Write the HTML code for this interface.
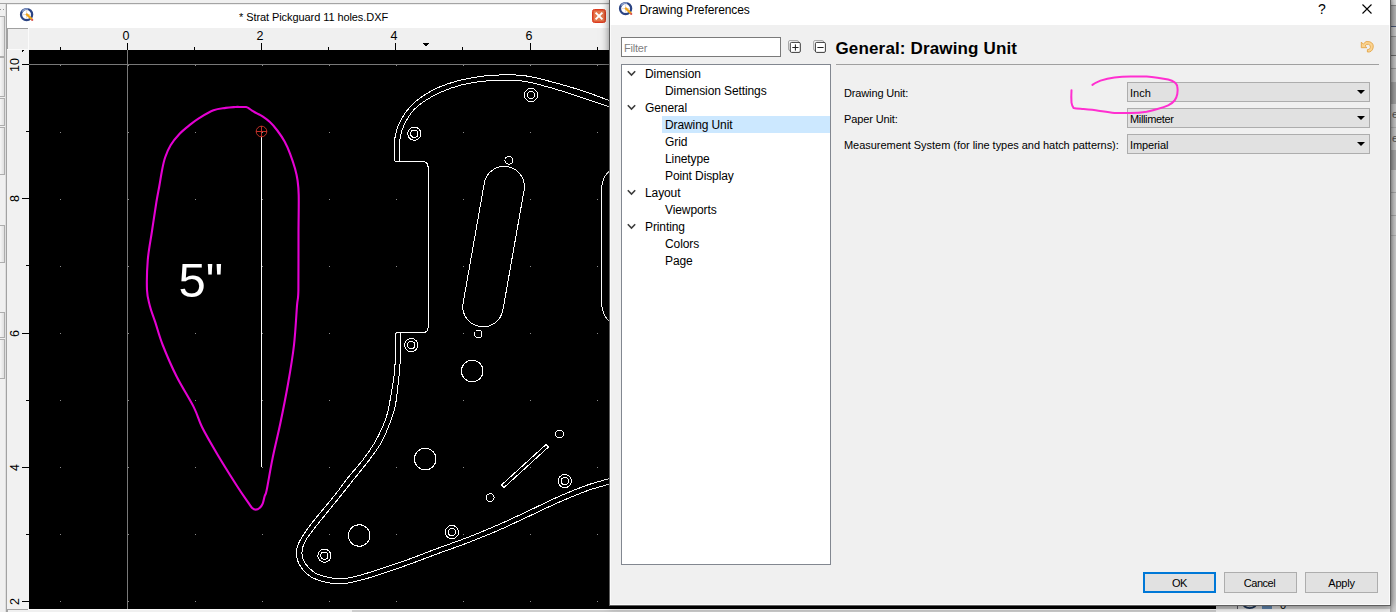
<!DOCTYPE html>
<html lang="en">
<head>
<meta charset="utf-8">
<title>Drawing Preferences</title>
<style>
html,body{margin:0;padding:0;}
body{width:1396px;height:612px;overflow:hidden;position:relative;background:#f0f0f0;font-family:"Liberation Sans",sans-serif;font-size:11px;color:#000;}
.abs{position:absolute;}
/* background application */
#topband{left:0;top:0;width:1396px;height:3px;background:#f0f0f0;}
#topline{left:0;top:3px;width:1396px;height:1px;background:#a4a4a4;}
#leftcol{left:0;top:4px;width:6px;height:608px;background:#f0f0f0;}
#leftline{left:5px;top:4px;width:2px;height:608px;background:linear-gradient(90deg,#dedede 50%,#a2a2a2 50%);}
.lbtn{left:0;width:4px;border:1px solid #adadad;border-left:none;background:linear-gradient(90deg,#f6f6f6,#e0e0e0);}
#mdititle{left:7px;top:4px;width:603px;height:24px;background:linear-gradient(#e6e6e6,#fff 1.5px);}
#mdititle .t{left:232px;top:6px;font-size:11px;line-height:14px;white-space:nowrap;letter-spacing:-0.08px;}
#mdiclose{left:592px;top:9px;width:12px;height:12px;border:1px solid #dc3c20;border-radius:2.5px;background:#e4784e;box-shadow:inset 0 0 0 0.5px #dc3c20;}
#hruler{left:7px;top:28px;width:1230px;height:22px;background:#f0f0f0;}
#corner{left:7px;top:28px;width:21px;height:21px;background:#efefef;border-top:1px solid #a0a0a0;border-left:1px solid #a0a0a0;box-sizing:border-box;}
#cornerw{left:28px;top:28px;width:1px;height:22px;background:#fbfbfb;}
#vruler{left:7px;top:49px;width:22px;height:560px;background:#f1f1f1;border-top:1px solid #fbfbfb;box-sizing:border-box;}
.hl{font-size:12.5px;top:30px;width:20px;text-align:center;line-height:12px;}
.vl{font-size:12.5px;left:9px;width:12px;height:20px;line-height:12px;writing-mode:vertical-rl;transform:rotate(180deg);text-align:center;white-space:nowrap;}
#canvas{left:29px;top:50px;width:1187px;height:559px;background:#000;}
#below{left:7px;top:609px;width:1389px;height:3px;background:#f0f0f0;}
#hscroll{left:352px;top:610px;width:864px;height:2px;background:#cdcdcd;}
#rightbg{left:1216px;top:0;width:180px;height:612px;background:#c4c4c4;}
#rightpanel{left:1237px;top:0;width:159px;height:612px;background:#cdcdcd;border-left:1px solid #55555f;}
/* dialog */
#shadow{left:610px;top:0;width:780px;height:605px;box-shadow:0 0 8px 1px rgba(0,0,0,.5);}
#dlgb{left:609px;top:-1px;width:780px;height:605px;border:1px solid #5f5f5f;}
#dlg{left:610px;top:0;width:780px;height:605px;background:#f0f0f0;box-shadow:inset 1px 0 #fbfbfb,inset -1px 0 #fbfbfb,inset 0 -1px #fbfbfb;}
#dlgtitle{left:0;top:0;width:780px;height:25px;background:#fff;}
#dlgtitle .t{left:29.5px;top:3px;font-size:12px;white-space:nowrap;letter-spacing:-0.1px;}
#filter{left:11px;top:37px;width:158px;height:18px;border:1px solid #7a7a7a;background:#fff;}
#filter span{position:absolute;left:2px;top:3px;font-size:11px;line-height:14px;color:#7f7f7f;letter-spacing:-0.2px;}
#tree{left:11px;top:64px;width:208px;height:499px;border:1px solid #828790;background:#fff;}
.row{left:0;width:208px;height:17px;line-height:17px;font-size:12px;white-space:nowrap;letter-spacing:-0.1px;}
.row .p{position:absolute;left:23px;top:1px;}
.row .c{position:absolute;left:43px;top:1px;}
.row svg{position:absolute;left:5px;top:4px;}
#sel{left:40px;top:51px;width:168px;height:17px;background:#cce8ff;}
#heading{left:225.5px;top:38.5px;font-size:17px;font-weight:bold;white-space:nowrap;letter-spacing:0.15px;}
#hr{left:226px;top:64px;width:543px;height:1px;background:#a0a0a0;}
.lab{left:234px;font-size:11px;white-space:nowrap;line-height:14px;letter-spacing:-0.08px;}
.combo{left:517px;width:241px;height:18px;border:1px solid #adadad;background:#e1e1e1;}
.combo span{position:absolute;left:2px;top:3px;font-size:11px;line-height:14px;}
.combo i{position:absolute;left:228.5px;top:7px;width:0;height:0;border-left:4px solid transparent;border-right:4px solid transparent;border-top:4px solid #000;}
.btn{top:572px;width:71px;height:19px;border:1px solid #adadad;background:#e1e1e1;text-align:center;line-height:21px;font-size:11px;}
#ok{border:2px solid #0078d7;width:69px;height:17px;line-height:19px;}
</style>
</head>
<body>
<!-- background app -->
<div id="topband" class="abs"></div>
<div id="topline" class="abs"></div>
<div id="leftcol" class="abs"></div>
<div id="leftline" class="abs"></div>
<div class="lbtn abs" style="top:16px;height:39px"></div><div class="abs" style="left:0;top:9px;width:1px;height:1px;background:#999"></div><div class="abs" style="left:3px;top:9px;width:1px;height:1px;background:#999"></div><div class="lbtn abs" style="top:57px;height:38px"></div><div class="lbtn abs" style="top:98px;height:26px"></div><div class="lbtn abs" style="top:127px;height:46px"></div><div class="lbtn abs" style="top:225px;height:36px"></div><div class="lbtn abs" style="top:312px;height:24px"></div><div class="lbtn abs" style="top:339px;height:38px"></div>
<div id="rightbg" class="abs"></div>
<div id="rightpanel" class="abs"></div>
<svg class="abs" style="left:1237px;top:590px" width="70" height="22" viewBox="1237 590 70 22">
<ellipse cx="1249.7" cy="602.5" rx="7.2" ry="5.6" fill="none" stroke="#1c3354" stroke-width="1.7"/>
<circle cx="1249.7" cy="602.5" r="3" fill="none" stroke="#1c3354" stroke-width="1.5"/>
<rect x="1262" y="600" width="10" height="10.5" fill="#5d81a8"/>
<text x="1280" y="608.7" font-family="Liberation Sans, sans-serif" font-size="11" fill="#000">0</text>
</svg>
<div id="mdititle" class="abs">
  <div class="t abs">* Strat Pickguard 11 holes.DXF</div>
</div>
<div id="mdiclose" class="abs"><svg class="abs" style="left:0;top:0" width="12" height="12"><path d="M2.6 2.6 L9.4 9.4 M9.4 2.6 L2.6 9.4" stroke="#fff" stroke-width="2" fill="none"/></svg></div>
<svg class="abs" style="left:19.2px;top:7.4px" width="16" height="16" viewBox="0 0 16 16"><circle cx="7.6" cy="7.6" r="5.6" fill="#fff" stroke="#2b4484" stroke-width="2.2"/><path d="M7.6 3.4 V11.6 M3.4 7.6 H11.6" stroke="#d9c9c9" stroke-width="0.8" fill="none"/><path d="M3.2 4.6 A5.6 5.6 0 0 1 9 2.2" stroke="#8fa3cf" stroke-width="1.6" fill="none"/><path d="M7.8 7.4 L12.6 12" stroke="#f2a516" stroke-width="2.2" stroke-linecap="round" fill="none"/><circle cx="13.2" cy="12.9" r="1.1" fill="#d9534f"/></svg>
<div id="hruler" class="abs"></div>
<div id="corner" class="abs"></div>
<div id="cornerw" class="abs"></div>
<div id="vruler" class="abs"></div>
<!--RULER-->
<svg class="abs" style="left:0;top:0" width="1237" height="612" shape-rendering="crispEdges" fill="#000">
<rect x="60" y="47" width="1" height="3"/>
<rect x="127" y="43" width="1" height="7"/>
<rect x="194" y="47" width="1" height="3"/>
<rect x="261" y="43" width="1" height="7"/>
<rect x="328" y="47" width="1" height="3"/>
<rect x="395" y="43" width="1" height="7"/>
<rect x="462" y="47" width="1" height="3"/>
<rect x="530" y="43" width="1" height="7"/>
<rect x="597" y="47" width="1" height="3"/>
<rect x="22" y="64" width="7" height="1"/>
<rect x="26" y="131" width="3" height="1"/>
<rect x="22" y="198" width="7" height="1"/>
<rect x="26" y="265" width="3" height="1"/>
<rect x="22" y="333" width="7" height="1"/>
<rect x="26" y="400" width="3" height="1"/>
<rect x="22" y="467" width="7" height="1"/>
<rect x="26" y="534" width="3" height="1"/>
<rect x="22" y="601" width="7" height="1"/>
<path d="M423 43 h6 v1 h-1 v1 h-1 v1 h-2 v-1 h-1 v-1 h-1 z"/>
<path d="M22 50 h2 v1 h-1 v1 h-1 z"/>
</svg>
<div class="hl abs" style="left:116px">0</div>
<div class="hl abs" style="left:250px">2</div>
<div class="hl abs" style="left:384px">4</div>
<div class="hl abs" style="left:519px">6</div>
<div class="vl abs" style="top:55px">10</div>
<div class="vl abs" style="top:189px">8</div>
<div class="vl abs" style="top:324px">6</div>
<div class="vl abs" style="top:458px">4</div>
<div class="vl abs" style="top:592px">2</div>
<!--/RULER-->
<div id="canvas" class="abs"></div>
<!--CANVAS-START-->
<svg class="abs" style="left:0;top:0" width="1396" height="612" viewBox="0 0 1396 612">
<defs><clipPath id="cv"><rect x="29" y="50" width="1187" height="559"/></clipPath></defs>
<g clip-path="url(#cv)" fill="none" shape-rendering="crispEdges">
<rect x="127" y="50" width="1" height="559" fill="#787878"/>
<rect x="29" y="64" width="1187" height="1" fill="#787878"/>
<g fill="#8a8a8a"><rect x="60" y="65" width="1" height="1"/><rect x="60" y="132" width="1" height="1"/><rect x="60" y="199" width="1" height="1"/><rect x="60" y="266" width="1" height="1"/><rect x="60" y="333" width="1" height="1"/><rect x="60" y="400" width="1" height="1"/><rect x="60" y="467" width="1" height="1"/><rect x="60" y="534" width="1" height="1"/><rect x="60" y="601" width="1" height="1"/><rect x="128" y="65" width="1" height="1"/><rect x="128" y="132" width="1" height="1"/><rect x="128" y="199" width="1" height="1"/><rect x="128" y="266" width="1" height="1"/><rect x="128" y="333" width="1" height="1"/><rect x="128" y="400" width="1" height="1"/><rect x="128" y="467" width="1" height="1"/><rect x="128" y="534" width="1" height="1"/><rect x="128" y="601" width="1" height="1"/><rect x="195" y="65" width="1" height="1"/><rect x="195" y="132" width="1" height="1"/><rect x="195" y="199" width="1" height="1"/><rect x="195" y="266" width="1" height="1"/><rect x="195" y="333" width="1" height="1"/><rect x="195" y="400" width="1" height="1"/><rect x="195" y="467" width="1" height="1"/><rect x="195" y="534" width="1" height="1"/><rect x="195" y="601" width="1" height="1"/><rect x="262" y="65" width="1" height="1"/><rect x="262" y="132" width="1" height="1"/><rect x="262" y="199" width="1" height="1"/><rect x="262" y="266" width="1" height="1"/><rect x="262" y="333" width="1" height="1"/><rect x="262" y="400" width="1" height="1"/><rect x="262" y="467" width="1" height="1"/><rect x="262" y="534" width="1" height="1"/><rect x="262" y="601" width="1" height="1"/><rect x="329" y="65" width="1" height="1"/><rect x="329" y="132" width="1" height="1"/><rect x="329" y="199" width="1" height="1"/><rect x="329" y="266" width="1" height="1"/><rect x="329" y="333" width="1" height="1"/><rect x="329" y="400" width="1" height="1"/><rect x="329" y="467" width="1" height="1"/><rect x="329" y="534" width="1" height="1"/><rect x="329" y="601" width="1" height="1"/><rect x="396" y="65" width="1" height="1"/><rect x="396" y="132" width="1" height="1"/><rect x="396" y="199" width="1" height="1"/><rect x="396" y="266" width="1" height="1"/><rect x="396" y="333" width="1" height="1"/><rect x="396" y="400" width="1" height="1"/><rect x="396" y="467" width="1" height="1"/><rect x="396" y="534" width="1" height="1"/><rect x="396" y="601" width="1" height="1"/><rect x="463" y="65" width="1" height="1"/><rect x="463" y="132" width="1" height="1"/><rect x="463" y="199" width="1" height="1"/><rect x="463" y="266" width="1" height="1"/><rect x="463" y="333" width="1" height="1"/><rect x="463" y="400" width="1" height="1"/><rect x="463" y="467" width="1" height="1"/><rect x="463" y="534" width="1" height="1"/><rect x="463" y="601" width="1" height="1"/><rect x="530" y="65" width="1" height="1"/><rect x="530" y="132" width="1" height="1"/><rect x="530" y="199" width="1" height="1"/><rect x="530" y="266" width="1" height="1"/><rect x="530" y="333" width="1" height="1"/><rect x="530" y="400" width="1" height="1"/><rect x="530" y="467" width="1" height="1"/><rect x="530" y="534" width="1" height="1"/><rect x="530" y="601" width="1" height="1"/><rect x="597" y="65" width="1" height="1"/><rect x="597" y="132" width="1" height="1"/><rect x="597" y="199" width="1" height="1"/><rect x="597" y="266" width="1" height="1"/><rect x="597" y="333" width="1" height="1"/><rect x="597" y="400" width="1" height="1"/><rect x="597" y="467" width="1" height="1"/><rect x="597" y="534" width="1" height="1"/><rect x="597" y="601" width="1" height="1"/><rect x="664" y="65" width="1" height="1"/><rect x="664" y="132" width="1" height="1"/><rect x="664" y="199" width="1" height="1"/><rect x="664" y="266" width="1" height="1"/><rect x="664" y="333" width="1" height="1"/><rect x="664" y="400" width="1" height="1"/><rect x="664" y="467" width="1" height="1"/><rect x="664" y="534" width="1" height="1"/><rect x="664" y="601" width="1" height="1"/></g>
</g>
<g clip-path="url(#cv)" fill="none" stroke="#fff" stroke-width="1" shape-rendering="crispEdges">
<path d="M394.4 161.4 C394.4 158.2 394.0 147.6 394.4 142.5 C394.8 137.4 395.3 134.6 396.5 130.6 C397.7 126.6 399.3 122.7 401.6 118.7 C403.9 114.7 406.7 110.5 410.1 106.8 C413.5 103.1 417.2 99.9 422.0 96.6 C426.8 93.3 433.3 89.8 439.0 87.2 C444.7 84.7 450.3 82.9 456.0 81.3 C461.7 79.7 467.3 78.6 473.0 77.6 C478.7 76.6 484.2 75.9 490.0 75.4 C495.8 75.0 502.8 74.9 508.0 74.9 C513.2 74.9 516.7 74.9 521.1 75.3 C525.5 75.7 529.2 76.4 534.4 77.5 C539.6 78.6 546.3 80.4 552.2 82.0 C558.1 83.6 564.0 85.1 569.9 86.9 C575.8 88.7 581.1 90.3 587.7 92.6 C594.3 94.9 605.2 99.0 609.4 100.6 C613.6 102.2 612.4 101.8 613.0 102.0"/>
<path d="M399.5 161.4 C399.5 158.2 399.1 147.5 399.5 142.5 C399.9 137.5 400.5 135.1 401.6 131.4 C402.8 127.7 404.3 124.1 406.4 120.4 C408.5 116.7 411.0 112.7 414.3 109.3 C417.6 105.9 421.5 103.0 426.2 100.0 C430.9 97.0 436.9 93.9 442.4 91.5 C447.9 89.1 453.7 87.1 459.4 85.5 C465.1 83.9 470.7 82.9 476.4 82.1 C482.1 81.2 488.1 80.8 493.4 80.4 C498.7 80.1 504.0 80.0 508.0 80.0 C512.0 80.0 513.8 80.0 517.5 80.4 C521.2 80.8 525.0 81.3 530.0 82.4 C535.0 83.5 541.8 85.3 547.7 86.9 C553.6 88.5 559.6 90.4 565.5 92.2 C571.4 94.0 575.9 95.6 583.2 98.0 C590.5 100.4 604.4 105.0 609.4 106.7 C614.4 108.4 612.4 107.8 613.0 108.0"/>
<path d="M394.5 161.5 H423 Q427.8 161.8 428 166.5 V328 Q427.8 332.3 423.5 332.5 H395.5"/>
<path d="M395.5 332.5 C395.5 335.7 395.9 344.6 395.7 351.9 C395.4 359.2 394.9 368.4 394.0 376.4 C393.1 384.4 391.2 393.9 390.1 400.0 C389.0 406.1 388.8 408.4 387.5 413.0 C386.2 417.6 384.5 422.5 382.3 427.5 C380.1 432.5 377.7 437.7 374.4 443.1 C371.1 448.5 367.4 454.0 362.7 460.1 C358.0 466.2 350.7 474.1 346.3 479.7 C341.9 485.2 342.1 486.0 336.2 493.4 C330.3 500.8 317.0 516.3 310.9 524.3 C304.8 532.2 302.1 536.4 299.7 541.1 C297.3 545.8 296.3 548.4 296.3 552.4 C296.3 556.4 297.3 560.9 299.7 565.0 C302.1 569.1 306.2 573.8 310.9 576.8 C315.6 579.8 322.9 581.5 327.8 582.7 C332.7 583.9 336.0 583.9 340.0 583.8 C344.0 583.7 346.6 583.5 352.0 582.3 C357.4 581.1 363.8 579.6 372.7 576.8 C381.6 574.0 394.5 569.6 405.4 565.7 C416.3 561.8 427.2 557.6 438.0 553.6 C448.8 549.6 459.8 545.9 470.0 541.9 C480.2 537.9 489.6 534.2 499.4 529.9 C509.2 525.6 519.0 520.8 528.8 516.3 C538.6 511.7 548.4 506.9 558.2 502.6 C568.0 498.3 579.1 493.7 587.6 490.6 C596.1 487.6 604.8 485.5 609.0 484.3 C613.2 483.1 612.3 483.5 613.0 483.3"/>
<path d="M400.3 332.5 C400.3 337.4 400.5 353.6 400.2 361.7 C399.9 369.8 399.0 374.9 398.4 381.3 C397.8 387.7 397.1 394.7 396.3 400.0 C395.5 405.3 394.8 408.4 393.4 413.0 C392.0 417.6 390.3 422.5 388.2 427.5 C386.1 432.5 384.2 437.7 381.0 443.1 C377.8 448.5 373.8 454.0 369.2 460.1 C364.6 466.2 358.3 473.7 353.5 479.7 C348.7 485.7 346.6 488.5 340.4 496.2 C334.2 503.9 322.4 518.2 316.5 525.7 C310.6 533.2 307.7 536.7 305.3 541.1 C302.9 545.5 302.0 548.8 301.9 552.4 C301.8 556.0 302.5 559.4 304.7 562.8 C306.9 566.2 311.0 570.4 315.1 572.9 C319.2 575.4 325.1 576.6 329.2 577.6 C333.3 578.6 336.2 578.8 340.0 578.8 C343.8 578.8 346.6 578.5 352.0 577.3 C357.4 576.1 363.8 574.2 372.7 571.4 C381.6 568.6 394.5 564.4 405.4 560.5 C416.3 556.6 427.2 552.2 438.0 548.2 C448.8 544.2 459.8 540.5 470.0 536.5 C480.2 532.5 489.6 528.6 499.4 524.3 C509.2 520.0 519.0 515.3 528.8 510.7 C538.6 506.1 548.4 501.1 558.2 496.8 C568.0 492.5 579.1 488.0 587.6 485.0 C596.1 482.0 604.8 479.9 609.0 478.7 C613.2 477.5 612.3 477.9 613.0 477.7"/>
<path d="M484.3 183.1 A20.2 20.2 0 0 1 524.1 190.1 L502.9 310.1 A20.2 20.2 0 0 1 463.1 303.1 Z"/>
<path d="M616 168 Q601.5 172 601.5 192 V300 Q601.5 320 616 325"/>
<circle cx="531.0" cy="95.0" r="6.6"/><circle cx="531.0" cy="95.0" r="3.6"/>
<circle cx="414.3" cy="133.7" r="6.6"/><circle cx="414.3" cy="133.7" r="3.6"/>
<circle cx="411.2" cy="345.1" r="6.6"/><circle cx="411.2" cy="345.1" r="3.6"/>
<circle cx="324.4" cy="555.7" r="6.6"/><circle cx="324.4" cy="555.7" r="3.6"/>
<circle cx="451.9" cy="532.1" r="6.6"/><circle cx="451.9" cy="532.1" r="3.6"/>
<circle cx="564.8" cy="481.1" r="6.6"/><circle cx="564.8" cy="481.1" r="3.6"/>
<circle cx="508.8" cy="160.3" r="3.9"/>
<circle cx="478.1" cy="334.0" r="3.9"/>
<circle cx="559.6" cy="434.0" r="3.9"/>
<circle cx="490.2" cy="497.6" r="3.9"/>
<circle cx="472.2" cy="371.0" r="10.8"/>
<circle cx="425.2" cy="459.1" r="10.8"/>
<circle cx="359.2" cy="535.5" r="10.8"/>
<path d="M501.5 485 L546 444.5 L548.5 447 L504 487.5 Z"/>
<path d="M261.5 137 V467" stroke-width="1"/>
</g>
<g clip-path="url(#cv)" fill="none" stroke="#c03028" stroke-width="1"><circle cx="261.5" cy="131.5" r="5.3"/><path d="M256 131.5 H267 M261.5 126 V137"/></g>
<path clip-path="url(#cv)" d="M240.0 107.0 C239.3 107.0 238.0 106.8 235.6 107.0 C233.2 107.2 229.5 107.4 225.8 107.9 C222.1 108.5 218.0 108.6 213.5 110.3 C209.0 112.0 202.9 115.8 198.8 118.3 C194.7 120.8 192.3 122.9 189.0 125.6 C185.7 128.2 182.3 130.9 179.2 134.2 C176.1 137.5 172.9 141.3 170.6 145.2 C168.2 149.1 166.5 153.4 165.1 157.5 C163.7 161.6 163.0 165.4 162.1 170.0 C161.2 174.6 160.4 179.7 159.5 185.0 C158.6 190.3 157.7 194.3 156.4 202.0 C155.2 209.7 153.4 221.4 152.0 231.0 C150.6 240.6 148.6 249.9 147.8 259.7 C147.0 269.5 146.7 282.3 147.0 290.0 C147.3 297.7 148.5 300.5 149.8 305.7 C151.1 310.9 152.8 314.8 155.0 321.4 C157.2 327.9 159.1 335.9 162.7 345.0 C166.3 354.1 171.3 365.9 176.5 376.3 C181.7 386.7 189.8 399.2 194.0 407.6 C198.2 416.1 198.1 419.1 202.0 427.0 C205.9 434.9 211.8 444.9 217.6 454.7 C223.4 464.5 231.8 477.8 237.0 486.0 C242.2 494.2 246.5 500.0 249.0 503.7 C251.5 507.4 251.1 507.0 252.2 508.0 C253.3 509.0 254.5 509.6 255.7 509.6 C256.9 509.6 258.4 509.0 259.6 508.0 C260.8 507.0 261.9 505.7 262.7 503.7 C263.5 501.7 264.0 498.3 264.7 496.0 C265.4 493.7 265.4 496.2 266.7 490.0 C268.0 483.8 270.2 469.8 272.5 458.6 C274.8 447.4 277.8 435.4 280.4 423.0 C283.0 410.6 285.7 397.0 288.0 384.0 C290.3 371.0 292.5 358.1 294.0 345.0 C295.5 331.9 296.3 314.9 297.0 305.7 C297.7 296.5 298.1 302.4 298.4 290.0 C298.6 277.6 298.4 246.8 298.5 231.0 C298.6 215.2 298.9 203.5 298.7 195.0 C298.5 186.5 298.1 184.4 297.5 180.0 C296.9 175.6 296.2 172.9 295.0 168.5 C293.8 164.1 291.8 158.3 290.1 153.8 C288.4 149.3 286.7 145.5 284.6 141.6 C282.5 137.7 279.8 133.8 277.3 130.5 C274.9 127.2 272.4 124.3 269.9 122.0 C267.4 119.7 264.7 117.9 262.5 116.4 C260.3 114.9 258.2 114.2 256.5 113.2 C254.8 112.2 253.3 111.4 252.0 110.6 C250.7 109.8 249.6 108.8 248.6 108.2 C247.6 107.6 246.9 107.3 246.0 107.1 C245.1 106.9 244.0 107.0 243.0 107.0 C242.0 107.0 240.5 107.0 240.0 107.0" fill="none" stroke="#e400d2" stroke-width="2.1" stroke-linejoin="round"/>
<text clip-path="url(#cv)" x="178.5" y="296.8" font-family="Liberation Sans, sans-serif" font-size="49" fill="#fff">5"</text>
</svg>
<!--CANVAS-END-->
<div id="below" class="abs"></div>
<div id="hscroll" class="abs"></div>
<div class="abs" style="left:7px;top:609px;width:21px;height:1px;background:#a4a4a4"></div><div class="abs" style="left:7px;top:610px;width:1px;height:2px;background:#a4a4a4"></div><div class="abs" style="left:28px;top:609px;width:1188px;height:1px;background:#fbfbfb"></div>

<div class="abs" id="rstrip" style="left:1390px;top:0;width:6px;height:612px;background:#c6c6c6;overflow:hidden;">
<div class="abs" style="left:0;top:0;width:6px;height:5px;background:#dcdcdc"></div>
<div class="abs" style="left:0;top:5px;width:6px;height:21px;background:#b9b9b9;border-top:1px solid #8a8a8a"></div>
<div class="abs" style="left:0;top:26px;width:6px;height:10px;background:#cbcbcb;border-top:1px solid #4a5878"></div>
<div class="abs" style="left:0;top:36px;width:6px;height:19px;background:#bdbdbd;border-top:1px solid #8f8f8f"></div>
<div class="abs" style="left:0;top:55px;width:6px;height:13px;background:#cacaca;border-top:1px solid #6e6e6e"></div>
<div class="abs" style="left:0;top:68px;width:6px;height:14px;background:#c4c4c4;border-top:1px solid #9a9a9a"></div>
<div class="abs" style="left:0;top:82px;width:6px;height:22px;background:#a4a4a4"></div>
<div class="abs" style="left:0;top:104px;width:6px;height:23px;background:#cacaca"></div>
<div class="abs" style="left:0;top:127px;width:6px;height:23px;background:#cacaca;border-top:1px solid #b0b0b0"></div>
<div class="abs" style="left:0;top:150px;width:6px;height:20px;background:#a9a9a9"></div>
<div class="abs" style="left:0;top:170px;width:6px;height:442px;background:#cfcfcf"></div>
<div class="abs" style="left:0;top:192px;width:6px;height:1px;background:#aaa"></div>
<div class="abs" style="left:0;top:215px;width:6px;height:1px;background:#aaa"></div>
<div class="abs" style="left:0;top:235px;width:6px;height:1px;background:#b4b4b4"></div>
<div class="abs" style="left:2px;top:108px;font-size:11px;color:#555">e</div>
<div class="abs" style="left:2px;top:132px;font-size:11px;color:#555">e</div>
<div class="abs" style="left:0;top:0;width:6px;height:612px;background:linear-gradient(90deg,rgba(0,0,0,.2),rgba(0,0,0,.04) 50%,rgba(0,0,0,0))"></div>
</div>
<!-- dialog -->
<div id="shadow" class="abs"></div>
<div id="dlgb" class="abs"></div>
<div id="dlg" class="abs">
  <div id="dlgtitle" class="abs"><div class="t abs">Drawing Preferences</div></div>
<svg class="abs" style="left:8.2px;top:1.2px" width="16" height="16" viewBox="0 0 16 16"><circle cx="7.6" cy="7.6" r="5.6" fill="#fff" stroke="#2b4484" stroke-width="2.2"/><path d="M7.6 3.4 V11.6 M3.4 7.6 H11.6" stroke="#d9c9c9" stroke-width="0.8" fill="none"/><path d="M3.2 4.6 A5.6 5.6 0 0 1 9 2.2" stroke="#8fa3cf" stroke-width="1.6" fill="none"/><path d="M7.8 7.4 L12.6 12" stroke="#f2a516" stroke-width="2.2" stroke-linecap="round" fill="none"/><circle cx="13.2" cy="12.9" r="1.1" fill="#d9534f"/></svg>
  <svg class="abs" style="left:0;top:0" width="780" height="604" viewBox="610 0 780 604" fill="none">
    <!-- title buttons -->
    <path d="M1362.5 4.5 L1371.5 13.5 M1371.5 4.5 L1362.5 13.5" stroke="#000" stroke-width="1.1"/>
    <!-- expand / collapse icons -->
    <rect x="788.5" y="40.5" width="10" height="10" rx="1.5" stroke="#a9a9a9" fill="#f4f4f4"/>
    <rect x="790.3" y="42.4" width="10" height="10" rx="1.3" stroke="#3a3a3a" fill="#fff"/>
    <path d="M792.3 47.5 H798.5 M795.4 44.4 V50.6" stroke="#222" stroke-width="1"/>
    <rect x="813.6" y="40.5" width="10" height="10" rx="1.5" stroke="#a9a9a9" fill="#f4f4f4"/>
    <rect x="815.4" y="42.4" width="10" height="10" rx="1.3" stroke="#3a3a3a" fill="#fff"/>
    <path d="M817.4 47.5 H823.6" stroke="#222" stroke-width="1"/>
    <!-- undo icon -->
    <path d="M1361.3 42.1 L1363.3 44.1 A5.3 5.3 0 1 1 1367.4 52 L1367.4 49.6 A2.7 2.7 0 1 0 1365.2 46 L1366.9 47.7 L1361.3 47.7 Z" fill="#fbd38f" stroke="#e3a548" stroke-width="0.9" stroke-linejoin="round"/>
  </svg>
  <div class="abs" style="left:708px;top:1px;font-size:14px;line-height:16px;">?</div>
  <div id="filter" class="abs"><span>Filter</span></div>
  <div id="tree" class="abs">
    <div id="sel" class="abs"></div>
    <div class="row abs" style="top:0px"><svg width="9" height="9" viewBox="0 0 9 9"><path d="M0.8 2.3 L4.5 6 L8.2 2.3" fill="none" stroke="#3c3c3c" stroke-width="1.6"/></svg><span class="p">Dimension</span></div>
    <div class="row abs" style="top:17px"><span class="c">Dimension Settings</span></div>
    <div class="row abs" style="top:34px"><svg width="9" height="9" viewBox="0 0 9 9"><path d="M0.8 2.3 L4.5 6 L8.2 2.3" fill="none" stroke="#3c3c3c" stroke-width="1.6"/></svg><span class="p">General</span></div>
    <div class="row abs" style="top:51px"><span class="c">Drawing Unit</span></div>
    <div class="row abs" style="top:68px"><span class="c">Grid</span></div>
    <div class="row abs" style="top:85px"><span class="c">Linetype</span></div>
    <div class="row abs" style="top:102px"><span class="c">Point Display</span></div>
    <div class="row abs" style="top:119px"><svg width="9" height="9" viewBox="0 0 9 9"><path d="M0.8 2.3 L4.5 6 L8.2 2.3" fill="none" stroke="#3c3c3c" stroke-width="1.6"/></svg><span class="p">Layout</span></div>
    <div class="row abs" style="top:136px"><span class="c">Viewports</span></div>
    <div class="row abs" style="top:153px"><svg width="9" height="9" viewBox="0 0 9 9"><path d="M0.8 2.3 L4.5 6 L8.2 2.3" fill="none" stroke="#3c3c3c" stroke-width="1.6"/></svg><span class="p">Printing</span></div>
    <div class="row abs" style="top:170px"><span class="c">Colors</span></div>
    <div class="row abs" style="top:187px"><span class="c">Page</span></div>
  </div>
  <div id="heading" class="abs">General: Drawing Unit</div>
  <div id="hr" class="abs"></div>

  <div class="lab abs" style="top:86px;letter-spacing:-0.14px">Drawing Unit:</div>
  <div class="lab abs" style="top:112px;letter-spacing:-0.13px">Paper Unit:</div>
  <div class="lab abs" style="top:138px;letter-spacing:-0.04px">Measurement System (for line types and hatch patterns):</div>
  <div class="combo abs" style="top:82px"><span>Inch</span><i></i></div>
  <div class="combo abs" style="top:108px"><span style="letter-spacing:-0.36px">Millimeter</span><i></i></div>
  <div class="combo abs" style="top:134px"><span style="letter-spacing:-0.1px">Imperial</span><i></i></div>
  <div id="ok" class="btn abs" style="left:533px;letter-spacing:-0.5px">OK</div>
  <div class="btn abs" style="left:614px;letter-spacing:-0.45px;width:69px;padding-right:2px">Cancel</div>
  <div class="btn abs" style="left:695px;letter-spacing:-0.25px">Apply</div>
  <svg class="abs" style="left:0;top:0" width="780" height="604" viewBox="610 0 780 604" fill="none">
    <!-- hand drawn highlight -->
    <path d="M1092.4 84.9 C1095 83 1097 82 1100.5 80.6 C1105 79 1109 78 1114.5 77.4 C1120 76.8 1125 76.6 1130.6 76.6 L1146.7 76.6 C1151 76.8 1154 77.2 1157.4 77.7 C1161 78.2 1165 78.8 1168.2 79.5 C1171 80.2 1173 81 1174.6 82.2 C1176 83.3 1177 84.8 1177.3 86.5 C1177.8 89 1177.8 91.5 1177.3 94 C1176.8 96.5 1176 98.8 1174.6 100.5 C1173 102.5 1171 104 1168.2 105.3 C1165 106.8 1161 108 1157.4 109 C1154 110 1150 111 1146.7 111.7 C1141 112.6 1136 113 1130.6 113 L1114.5 113 C1109 112.6 1104 111.6 1098.4 110.7 C1093 109.9 1088 109.5 1082.2 109 C1079 108.7 1076 108.5 1073.6 108 C1072.3 106.5 1071.8 104.5 1071.5 102.6 C1071.2 98.5 1071.2 94.5 1071.5 90.2" stroke="#ff2fd0" stroke-width="2" stroke-linecap="round" stroke-linejoin="round"/>
  </svg>
</div>
</body>
</html>
